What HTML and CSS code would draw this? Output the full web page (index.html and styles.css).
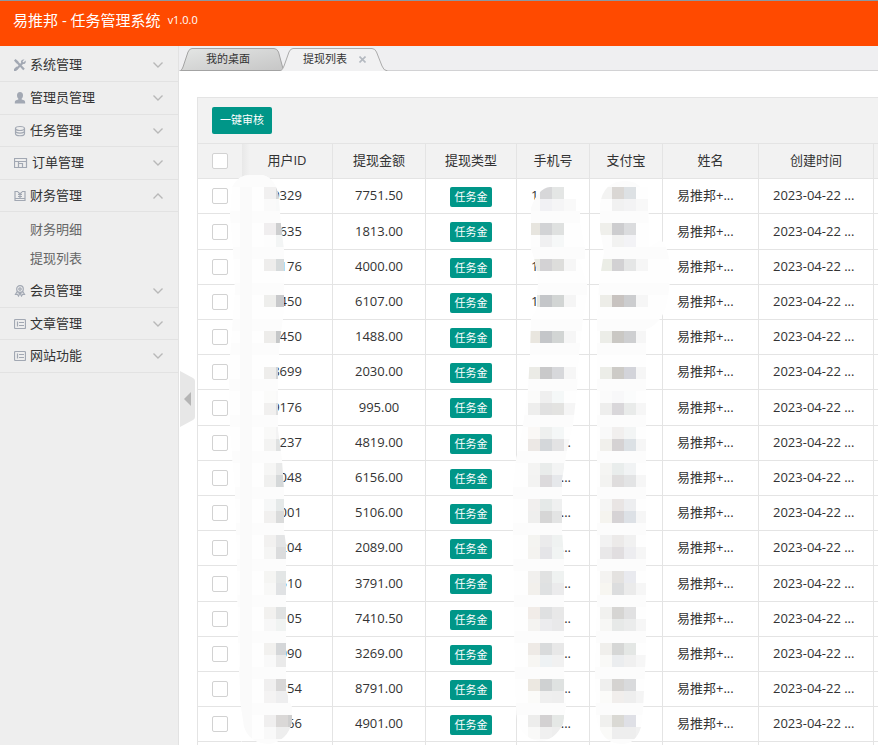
FILE: index.html
```html
<!DOCTYPE html>
<html lang="zh-CN">
<head>
<meta charset="utf-8">
<title>易推邦 - 任务管理系统</title>
<link rel="stylesheet" href="styles.css">
</head>
<body>
<header class="topbar"><h1 class="brand">易推邦 - 任务管理系统</h1><span class="version">v1.0.0</span></header>
<div class="layout">
  <nav class="sidebar">
    <ul class="menu">
      <li><button class="item" type="button"><svg class="icon" viewBox="0 0 12 12"><path d="M2 10.500L9 3.500M3 3l7 7.500" stroke="currentColor" stroke-width="2.200"/><path d="M0 1.500L1.500 0l3 2.500-2 2z" fill="currentColor"/><path d="M10.500.500L8.500 2.500l1 1 2-2c1 2.500-1 4-3 3.500L7 3.500C6.500 1.500 8 0 10.500.500zM0 10l2.500-2.500 2 2L2 12H0z" fill="currentColor"/></svg><span class="label">系统管理</span><svg class="chev" viewBox="0 0 10 6"><path d="M0.500.500L5 5 9.500.500"/></svg></button></li>
      <li><button class="item" type="button"><svg class="icon" viewBox="0 0 12 12"><path d="M6 0c2 0 3 1.300 3 3.200 0 1.500-.5 2.600-1.300 3.300v1L10 8.300c1 .400 1.200 1.200 1.200 3.200H.8C.8 9.500 1 8.700 2 8.300l2.300-.8v-1C3.500 5.800 3 4.700 3 3.200 3 1.300 4 0 6 0z" fill="currentColor"/></svg><span class="label">管理员管理</span><svg class="chev" viewBox="0 0 10 6"><path d="M0.500.500L5 5 9.500.500"/></svg></button></li>
      <li><button class="item" type="button"><svg class="icon line" viewBox="0 0 12 12"><ellipse cx="6" cy="3.500" rx="4.500" ry="2"/><path d="M1.500 3.500v5c0 3 9 3 9 0v-5M1.500 6c0 2.700 9 2.700 9 0"/></svg><span class="label">任务管理</span><svg class="chev" viewBox="0 0 10 6"><path d="M0.500.500L5 5 9.500.500"/></svg></button></li>
      <li><button class="item" type="button"><svg class="icon wide line" viewBox="0 0 14 12"><path d="M.5 1.500h12v9H.5zM.5 4.500h12M4.500 4.500v6M4.500 6.500h4v4"/></svg><span class="label">订单管理</span><svg class="chev" viewBox="0 0 10 6"><path d="M0.500.500L5 5 9.500.500"/></svg></button></li>
      <li><button class="item" type="button" aria-expanded="true"><svg class="icon line" viewBox="0 0 12 12"><path d="M4 1.500H1v9h10v-9H8M4 2l2 2 2-2M6 4v4M4 4.500h4M4 6.500h4M1 8.500h10"/></svg><span class="label">财务管理</span><svg class="chev" viewBox="0 0 10 6"><path d="M0.500 5.500L5 1l4.500 4.500"/></svg></button>
        <ul class="submenu"><li><a href="#detail">财务明细</a></li><li><a href="#withdraw">提现列表</a></li></ul></li>
      <li><button class="item" type="button"><svg class="icon line" viewBox="0 0 12 12"><circle cx="6" cy="4" r="3.300"/><circle cx="6" cy="4" r="1.200"/><path d="M3.200 6.500L1.500 9.500h2l1 1.500L6 8l1.500 3 1-1.500h2l-1.700-3M3.500 8h5"/></svg><span class="label">会员管理</span><svg class="chev" viewBox="0 0 10 6"><path d="M0.500.500L5 5 9.500.500"/></svg></button></li>
      <li><button class="item" type="button"><svg class="icon line" viewBox="0 0 12 12"><rect x=".5" y="1.500" width="11" height="9" rx="1"/><path d="M5 4.500h5M5 7.500h5M3.500 3.500v5"/></svg><span class="label">文章管理</span><svg class="chev" viewBox="0 0 10 6"><path d="M0.500.500L5 5 9.500.500"/></svg></button></li>
      <li><button class="item" type="button"><svg class="icon line" viewBox="0 0 12 12"><rect x=".5" y="1.500" width="11" height="9" rx="1"/><path d="M5 4.500h5M5 7.500h5M3.500 3.500v5"/></svg><span class="label">网站功能</span><svg class="chev" viewBox="0 0 10 6"><path d="M0.500.500L5 5 9.500.500"/></svg></button></li>
    </ul>
  </nav>
  <main class="main">
    <div class="tabs">
      <button class="tab" type="button"><svg class="shape" viewBox="0 0 104 24" preserveAspectRatio="none"><defs><linearGradient id="tabfill" x1="0" y1="0" x2="1" y2="1"><stop offset="0" stop-color="#e4e6e5"/><stop offset="1" stop-color="#c6c6c6"/></linearGradient></defs><path d="M.5 23.500Q2 23 3 20L8 5Q9.500 1.500 12 1.500H94Q97 1.500 98.500 5L103.500 23.500z" fill="url(#tabfill)" stroke="#a3a3a3"/></svg><span>我的桌面</span></button>
      <button class="tab current" type="button"><svg class="shape" viewBox="0 0 108 24" preserveAspectRatio="none"><path d="M.5 24Q3 22 4 19L9 5Q10.500 1.500 13 1.500H92Q95 1.500 96.500 5L102 19Q103.500 23.500 107.500 24" fill="#f1f1f2" stroke="#ababab"/></svg><span>提现列表</span><svg class="close" viewBox="0 0 7 7"><path d="M.5.500l6 6M6.500.500l-6 6"/></svg></button>
    </div>
    <button class="collapse" type="button" aria-label="收起"><svg viewBox="0 0 15 56"><path d="M0 0L13 7Q15 8 15 10V46Q15 48 13 49L0 56z" fill="#e7e7e7"/><path d="M4 28l7-7v14z" fill="#b5b5b5"/></svg></button>
    <section class="panel">
      <div class="toolbar"><button class="primary" type="button">一键审核</button></div>
      <div class="grid">
        <table>
          <colgroup><col class="c-check"><col class="c-id"><col class="c-sum"><col class="c-type"><col class="c-phone"><col class="c-phone"><col class="c-name"><col class="c-time"><col></colgroup>
          <thead><tr><th><input type="checkbox" aria-label="全选"></th><th class="edge">用户ID</th><th>提现金额</th><th>提现类型</th><th>手机号</th><th>支付宝</th><th>姓名</th><th>创建时间</th><th></th></tr></thead>
          <tbody id="rows"></tbody>
        </table>
        <svg class="mosaic" id="mosaic" width="480" height="572" viewBox="198 174 480 572" aria-hidden="true">
          <defs>
            <clipPath id="brush-id"><path d="M232 187Q238 175 250 175H262Q277 178 279 200L281 225 284 250V310L280 340 278 365V430L282 460 284 490V530L286 545V690L292 708V722Q288 740 270 744Q250 744 244 727L240 700 238 640 237 560 235 490 230 430 229 370 232 330 235 290 233 250 230 215z"/></clipPath>
            <clipPath id="brush-phone"><path d="M531 208Q538 188 550 187H564V199H576V211H580V222L585 247V259L579 260 587 283V294L583 319 579 354 577 389 573 425 567 450 562 480V530L564 560V670L566 706 563 724Q554 741 540 741Q522 739 517 720L515 690 513 530V485L516 460 523 425 528 389 530 354 531 319 537 308V295L538 284 537 272 534 258 531 249z"/></clipPath>
            <clipPath id="brush-alipay"><path d="M600 205Q603 181 625 181Q636 181 640 187H648L649 247 661 240Q668 246 670 266Q670 302 662 316Q654 328 646 329V650L643 710 641 727Q636 744 622 744Q600 744 596 715L595 670 597 600V319L599 284 604 252 600 230z"/></clipPath>
          </defs>
        </svg>
      </div>
    </section>
  </main>
</div>
<script src="app.js"></script>
</body>
</html>
```

FILE: styles.css
```css
* { box-sizing: border-box; }
body { margin: 0; height: 100vh; display: flex; flex-direction: column; overflow: hidden; background: #fff; color: #333; font: 13px/20px "Open Sans", "Noto Sans CJK SC", sans-serif; }
button { border: 0; padding: 0; background: none; font: inherit; color: inherit; }
ul { margin: 0; padding: 0; list-style: none; }
.topbar { flex: none; height: 46px; padding: 0 13px; display: flex; align-items: flex-start; gap: 7px; background: #ff4a00; border-top: 1px solid #8b98a2; color: #fff; }
.brand { margin: 8px 0 0; font-size: 15px; font-weight: 400; line-height: 22px; }
.version { margin-top: 9px; font-size: 11px; }
.layout { flex: 1; min-height: 0; display: flex; }

.sidebar { flex: none; width: 179px; background: #eee; border-right: 1px solid #e2e2e2; }
.menu { padding-top: 3px; }
.item { display: flex; align-items: center; gap: 4px; width: 100%; height: 33px; padding: 0 15px 0 14px; border-bottom: 1px solid #e2e2e2; text-align: left; }
.menu > li:nth-child(2n+3) .item { height: 32px; }
.label { flex: 1; padding-bottom: 2px; }
.icon { width: 12px; height: 12px; color: #a2a8b3; fill: none; }
.icon.wide { width: 14px; }
.line { stroke: currentColor; stroke-width: 1.2; }
.chev { width: 10px; height: 6px; fill: none; stroke: #b8b8b8; stroke-width: 1.4; }
.submenu { padding: 3px 0 2px; }
.submenu a { display: block; padding-left: 30px; line-height: 29px; color: #666; text-decoration: none; }

.main { flex: 1; min-width: 0; position: relative; display: flex; flex-direction: column; }
.tabs { flex: none; height: 25px; padding: 1px 0 0 1px; display: flex; background: #efeff1; border-bottom: 1px solid #d2d2d4; }
.tab { position: relative; width: 104px; height: 24px; padding: 0 0 0 26px; display: flex; align-items: center; font-size: 11px; }
.tab.current { width: 108px; margin-left: -4px; padding-left: 23px; gap: 12px; }
.tab span, .close { position: relative; }
.shape { position: absolute; left: 0; top: 0; width: 100%; height: 100%; }
.close { width: 7px; height: 7px; stroke: #b4b9c0; stroke-width: 1.6; }
.collapse { position: absolute; left: 1px; top: 325px; width: 15px; height: 56px; }
.collapse svg { display: block; width: 15px; height: 56px; }

.panel { margin: 26px 0 0 18px; flex: 1; border: solid #e4e4e4; border-width: 1px 0 0 1px; }
.toolbar { height: 46px; padding: 9px 14px; background: #f2f2f2; border-bottom: 1px solid #e4e4e4; }
.primary { display: block; height: 27px; padding: 0 8px 2px; border-radius: 2px; background: #009688; color: #fff; font-size: 11px; }
.grid { position: relative; }
table { width: 100%; table-layout: fixed; border-collapse: separate; border-spacing: 0; }
.c-check { width: 44px; } .c-id { width: 91px; } .c-sum { width: 93px; } .c-type { width: 91px; }
.c-phone { width: 73px; } .c-name { width: 96px; } .c-time { width: 115px; }
th, td { height: 35px; padding: 0 14px 2px; border: solid #e4e4e4; border-width: 0 1px 1px 0; font-weight: 400; text-align: center; white-space: nowrap; overflow: hidden; }
th { background: #f2f2f2; padding: 0 0 2px; }
th:first-child, td:first-child { padding: 0; border-right-color: transparent; }
th.edge { background: linear-gradient(90deg, #e8e8e8, #f2f2f2 8px); }
th:last-child, td:last-child { padding: 0; border-right: 0; }
tbody tr:nth-child(5n+2) td { height: 36px; }
td.left { text-align: left; }
td.phone div { display: flex; justify-content: space-between; padding-right: 4px; }
input[type="checkbox"] { appearance: none; display: block; width: 16px; height: 16px; margin: 0 14px; border: 1px solid #d2d2d2; border-radius: 2px; background: #fff; }
.tag { display: block; width: 42px; height: 20px; margin: 3px auto 0; border-radius: 2px; background: #009688; color: #fff; font-size: 11px; line-height: 19px; }
.mosaic { position: absolute; left: 0; top: 30px; }
```

FILE: app.js
```js
const records = [
  ["9329", "7751.50"], ["0635", "1813.00"], ["1176", "4000.00"], ["1450", "6107.00"],
  ["0450", "1488.00"], ["8699", "2030.00"], ["9176", "995.00"], ["9237", "4819.00"],
  ["0048", "6156.00"], ["0001", "5106.00"], ["1204", "2089.00"], ["1510", "3791.00"],
  ["1105", "7410.50"], ["1090", "3269.00"], ["1254", "8791.00"], ["1166", "4901.00"]
];
const emptyRow = "<tr>" + "<td></td>".repeat(9) + "</tr>";
document.getElementById("rows").innerHTML = records.map(([id, sum], i) => `<tr>
  <td><input type="checkbox" aria-label="选择"></td><td>${id}</td><td>${sum}</td>
  <td><span class="tag">任务金</span></td>
  <td class="phone"><div><span>1</span><span>${i > 6 ? "..." : ""}</span></div></td><td></td>
  <td class="left">易推邦+...</td><td class="left">2023-04-22 ...</td><td></td></tr>`).join("") + emptyRow;

// Each strip: y, then the block colours of the id, phone and alipay masks.
const strips = [
  [187, "f1f0f0 d5d7d8", "fafafa d7d7d9 e4e6e5", "f3f3f2 dad7d4 dde1e4"],
  [199, "fafafa f8f9f9", "fbfbfb f1f1f4 f5f5f6 f9f9f9", "fdfdfd f1f1f1 f3f3f4 f8f8f8"],
  [223, "f0eeef cdcecf", "e7e5df d2d3d5 dfe1e0", "efefeb cdcdcf dbdcde"],
  [235, "fdfdfd f3f5f5", "fdfdfd f0f0f1 f6f8f8", "fcfcfc f2f2f1 f3f3f6"],
  [259, "eeedec d6dadb", "eaebe5 d3d2d4 dddddb f6f6f6", "ebede6 d2d1d3 e5e6e6 f6f6f6"],
  [295, "eeeeec c8c9cb", "e6e7e1 c4c6c9 d2d5d4 f5f5f5", "edede8 c8c3c0 cccdcf f6f6f6"],
  [331, "edecea c5c7c8", "e9e6df c4c6c9 d2d5d4 f6f6f6", "ecede8 cac8c4 cecfd1 f6f6f6"],
  [367, "eeedeb d2d4d5", "ebebe6 c9c9ca d7d8db f6f6f6", "ecede8 cdcbc7 d3d4da f6f6f6"],
  [391, "fbfbfa f9f9f9", "fbfbfa efefef f5f8f8", "fbfbfb f8f8f9 fbfcfc"],
  [403, "f1f0ef dddedf", "eeeeed e1e1e1 e3e3e1 f5f5f5", "eeeeed d9d7da e9ebea f6f6f6"],
  [427, "f9f9f8 f3f3f3", "faf8f6 eef0ef f4f7f7", "f9f9f9 f1efee f3f5f5"],
  [439, "f3f3f2 dfe1e1", "ece8e5 d4d7da e3e3e4 f7f7f7", "f1f0ec d5d2d3 dce1e5 f6f6f6"],
  [463, "f6f6f5 e8e9e9", "f4f4f3 e9eceb f3f4f4", "f5f5f3 e9edec f1f3f4"],
  [475, "f0f0ef d5d8d9", "f3f3f2 dcdadc e6e8eb", "f3f3f1 dfdddd e3e4e5 f6f6f6"],
  [499, "f6f7f7 e5e9e9", "f1efee e5e9e8 eff0f0", "f5f5f4 e9e5e4 edeef0"],
  [511, "f1f0ef dadbdb", "efefee d6d6d6 e3e4e4", "f5f4ef d6d3d5 dde1e6 f6f6f6"],
  [535, "f2f1f0 e3e4e5", "f4f4f1 ebebec eff2f1", "f2f2f2 eceae9 f1f1f1"],
  [547, "f5f5f4 dbdcdd", "f4f3f0 e5e5e8 f1f4f3", "e9e8e9 e1dee0 ededf0 f6f6f6"],
  [571, "f5f5f3 e3e6e6", "f1f0ee e1e2e2 eff2f1", "f4f3f1 e4e2e0 e9eaef"],
  [583, "f8f8f7 e0e2e4", "f2f0ec dfe1e2 ebebec", "f7f6f1 dcddde ebebeb f6f6f6"],
  [607, "f2f1ef e0e2e2", "f1ece8 dfe0e1 e8e8e8", "f1f1ef d6d5d3 e1e1e2"],
  [619, "f7f7f7 f0f3f2", "f4f3f1 ececee e9e9ea", "f7f7f5 e7e9e8 ebecec f6f6f6"],
  [643, "f2f1ef d5d7d9", "eeeae6 d9dbdc e8e8e8", "f0efec d6d7d6 e4e7e5"],
  [655, "f9f9f9 eaeaea", "f7f6f3 eef2f4 f1f1f1", "f9f9f7 ebedef f0f0f0 f6f6f6"],
  [679, "f0efef d8d7d7", "ece8e1 cfd1d2 dfe2e1", "efefee d5d3d1 d9dadc"],
  [691, "f4f3f3 eeeeef", "fbfbf9 efefef eeeeee", "fbfbf9 f1eeec eeeeee f4f4f4"],
  [715, "f0efef dad8d7 cfcfcf", "ededec d3d1d2 e5e8e6", "f0f0ee dad9d4 dfe0e6"],
  [727, "f9f9f9 eeeeee eeeeee", "f9f9f8 f0f0f0 eeeeee", "fafaf8 eeeeee eeeeee f1f1f1"]
];
const bands = [175, 211, 247, 283, 319, 343, 379, 415, 451, 487, 523, 559, 595, 631, 667, 703, 739];
const rect = (x, y, w, h, fill) => `<rect x="${x}" y="${y}" width="${w}" height="${h}" fill="#${fill}"/>`;
const masks = [["brush-id", 264, 228, 72], ["brush-phone", 528, 504, 84], ["brush-alipay", 600, 588, 84]];
document.getElementById("mosaic").insertAdjacentHTML("beforeend", masks.map(([clip, start, x, w], m) =>
  `<g clip-path="url(#${clip})" shape-rendering="crispEdges">` + rect(x, 174, w, 572, "fefefe") +
  bands.map(y => rect(x, y, w, 12, "fcfcfc")).join("") +
  (m === 0 ? rect(240, 187, 12, 557, "fafafa") : "") +
  strips.map(s => s[m + 1].split(" ").map((c, i) => rect(start + i * 12, s[0], 12, 12, c)).join("")).join("") +
  "</g>").join(""));
```
